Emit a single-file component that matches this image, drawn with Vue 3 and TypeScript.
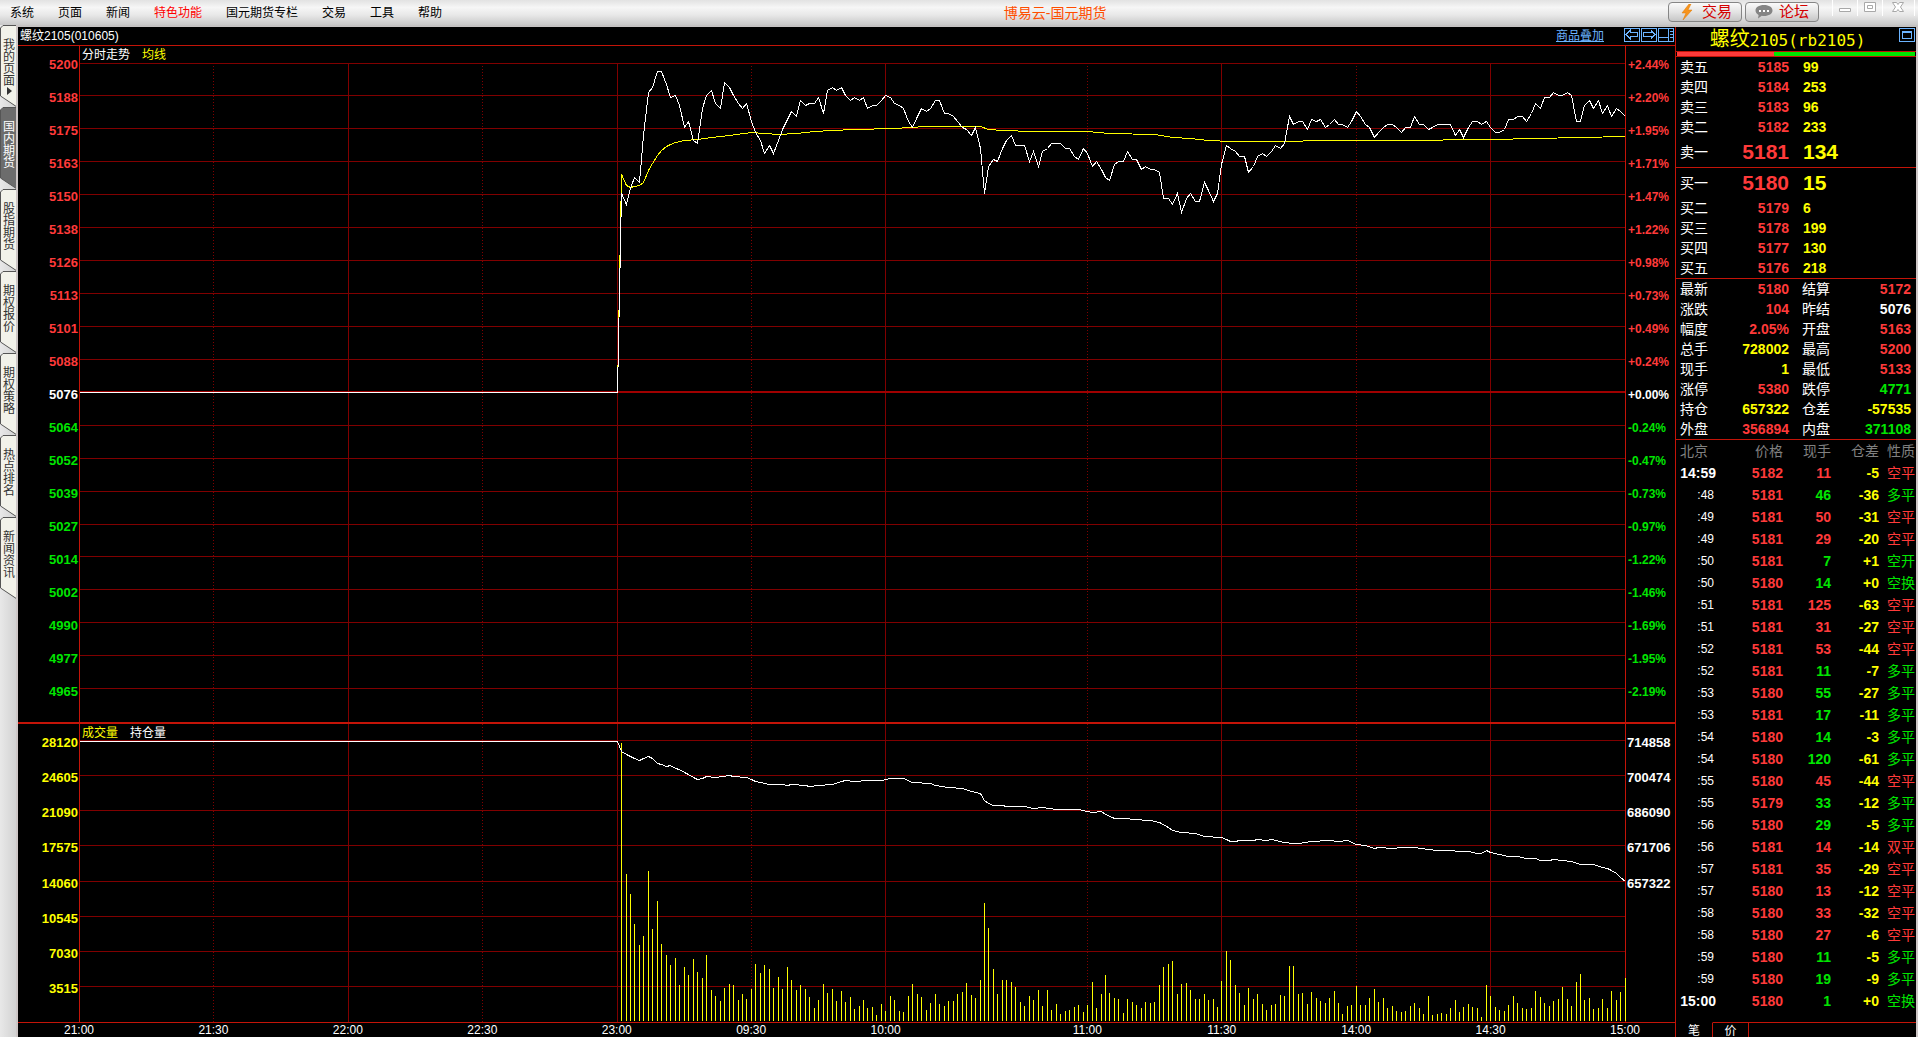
<script setup lang="ts">
import { computed, ref } from 'vue'

type Tone = 'up' | 'down' | 'flat' | 'vol'

interface MenuItem { label: string; hot?: boolean }
interface Level { name: string; price: number; qty: number }
interface Stat { name: string; value: string; tone: Tone }
interface Tick { time: string; price: number; qty: number; qtyTone: Tone; diff: string; kind: string; kindTone: Tone }

const menu: MenuItem[] = [
  { label: '系统' }, { label: '页面' }, { label: '新闻' }, { label: '特色功能', hot: true },
  { label: '国元期货专栏' }, { label: '交易' }, { label: '工具' }, { label: '帮助' },
]

const pages = ['我的页面', '国内期货', '股指期货', '期权报价', '期权策略', '热点排名', '新闻资讯']
const activePage = ref(1)

/* ---------- price and volume axes ---------- */
const priceLabels = [5200, 5188, 5175, 5163, 5150, 5138, 5126, 5113, 5101, 5088, 5076, 5064, 5052, 5039, 5027, 5014, 5002, 4990, 4977, 4965]
const percentLabels = ['+2.44%', '+2.20%', '+1.95%', '+1.71%', '+1.47%', '+1.22%', '+0.98%', '+0.73%', '+0.49%', '+0.24%', '+0.00%', '-0.24%', '-0.47%', '-0.73%', '-0.97%', '-1.22%', '-1.46%', '-1.69%', '-1.95%', '-2.19%']
const volumeLabels = [28120, 24605, 21090, 17575, 14060, 10545, 7030, 3515]
const interestLabels = ['714858', '700474', '686090', '671706', '657322', '', '', '']
const axisTone = (i: number): Tone => (i < 10 ? 'up' : i === 10 ? 'flat' : 'down')

/* ---------- session clock: minutes since 21:00, breaks removed ---------- */
const W = 1547
const MINUTES = 345
const OPEN = 120
const marks = [
  { at: 0, label: '21:00' }, { at: 30, label: '21:30' }, { at: 60, label: '22:00' }, { at: 90, label: '22:30' },
  { at: 120, label: '23:00' }, { at: 150, label: '09:30' }, { at: 180, label: '10:00' }, { at: 225, label: '11:00' },
  { at: 255, label: '11:30' }, { at: 285, label: '14:00' }, { at: 315, label: '14:30' }, { at: 345, label: '15:00' },
]
const span = (i: number): number => (i + 1 < marks.length ? marks[i + 1].at - marks[i].at : 0)
const innerMarks = marks.slice(1, -1).map((m, i) => ({ at: m.at, dotted: i % 2 === 0 }))

const px = (minute: number): number => Math.floor((minute * (W - 1)) / MINUTES + 0.3) + 0.5
const PRICE_H = 676
const VOLUME_H = 298
const py = (price: number): number => Math.round(17 + ((5200 - price) * 329) / 124) + 0.5
const priceGrid = priceLabels.map((_, i) => 17.5 + Math.floor(i * 32.93))
const volumeGrid = volumeLabels.map((_, i) => 16.5 + Math.floor(i * 35.25))

/* close of every minute from the open */
const closes = [
  5151, 5147, 5153, 5157, 5155, 5173, 5189, 5191, 5197, 5197, 5192, 5187, 5188, 5184, 5176, 5178, 5171, 5170, 5183, 5188,
  5190, 5185, 5183, 5193, 5191, 5188, 5185, 5183, 5185, 5178, 5174, 5171, 5166, 5169, 5166, 5171, 5175, 5179, 5182, 5180,
  5186, 5184, 5185, 5185, 5187, 5181, 5190, 5191, 5190, 5191, 5188, 5186, 5187, 5186, 5187, 5183, 5184, 5184, 5186, 5188,
  5187, 5185, 5184, 5183, 5178, 5176, 5180, 5183, 5182, 5183, 5186, 5186, 5181, 5181, 5180, 5178, 5176, 5175, 5173, 5176,
  5168, 5151, 5161, 5164, 5163, 5168, 5171, 5173, 5169, 5169, 5169, 5163, 5167, 5161, 5167, 5168, 5170, 5170, 5170, 5168,
  5168, 5165, 5164, 5168, 5166, 5161, 5163, 5160, 5157, 5156, 5162, 5163, 5163, 5167, 5164, 5164, 5160, 5161, 5160, 5160,
  5159, 5149, 5149, 5147, 5151, 5144, 5149, 5151, 5148, 5148, 5155, 5152, 5148, 5151, 5162, 5169, 5168, 5167, 5165, 5165,
  5159, 5161, 5165, 5166, 5165, 5167, 5169, 5168, 5170, 5180, 5177, 5178, 5178, 5175, 5179, 5178, 5179, 5176, 5177, 5179,
  5177, 5177, 5176, 5178, 5182, 5180, 5177, 5176, 5172, 5174, 5176, 5177, 5177, 5176, 5174, 5176, 5176, 5180, 5177, 5177,
  5175, 5176, 5177, 5177, 5177, 5177, 5173, 5175, 5172, 5176, 5178, 5178, 5177, 5178, 5176, 5174, 5174, 5175, 5179, 5179,
  5180, 5180, 5178, 5181, 5185, 5183, 5187, 5187, 5189, 5188, 5188, 5189, 5188, 5178, 5178, 5184, 5186, 5183, 5186, 5181,
  5184, 5180, 5183, 5182, 5180,
]

/* session average: [minute, price] */
const average: [number, number][] = [
  [120, 5076], [121, 5158.3], [122, 5154], [123, 5153.3], [124, 5153.6], [125, 5154], [126, 5155], [127, 5159.8], [128, 5162.3],
  [129, 5165.5], [130, 5167.3], [131, 5168.6], [132, 5169.6], [133, 5170.4], [135, 5171], [138, 5171.2], [141, 5172.1],
  [145, 5172.9], [150, 5174], [156, 5173.2], [160, 5173.7], [164, 5174.2], [168, 5174.7], [173, 5175.3], [182, 5175.6],
  [189, 5176.1], [201, 5176.1], [203, 5175.3], [206, 5174.7], [213, 5174.5], [225, 5174.2], [230, 5173.7], [240, 5173.1],
  [244, 5172.2], [248, 5171.6], [252, 5171.1], [257, 5170.7], [270, 5170.6], [276, 5170.9], [294, 5171.1], [315, 5171.4],
  [325, 5171.7], [335, 5172.1], [345, 5172.5],
]

/* open interest: [minute, depth below the top of the pane] */
const interest: [number, number][] = [
  [0, 17], [120, 17], [121, 27], [122, 30], [123, 32], [124, 34], [125, 36], [126, 34], [127, 32], [128, 34], [129, 39], [130, 40],
  [131, 42], [132, 41], [133, 44], [134, 45], [135, 48], [136, 50], [137, 53], [138, 55], [139, 54], [140, 52], [142, 53],
  [145, 51], [146, 52], [149, 53], [150, 55], [151, 57], [152, 58], [154, 60], [157, 60], [158, 61], [159, 60], [162, 61],
  [163, 62], [165, 61], [168, 60], [170, 57], [171, 56], [173, 57], [176, 56], [179, 56], [181, 54], [184, 54], [186, 58],
  [190, 59], [191, 61], [194, 63], [197, 64], [199, 67], [201, 69], [202, 76], [203, 79], [204, 81], [206, 81], [207, 82],
  [211, 82], [213, 84], [215, 83], [218, 85], [223, 85], [225, 87], [226, 88], [228, 87], [229, 90], [231, 94], [234, 94],
  [235, 95], [239, 96], [241, 98], [243, 103], [244, 106], [246, 108], [249, 109], [251, 112], [255, 113], [256, 115],
  [257, 117], [258, 117], [259, 116], [262, 116], [263, 115], [265, 116], [266, 115], [269, 118], [271, 119], [272, 119],
  [275, 117], [279, 116], [281, 117], [283, 116], [285, 120], [287, 121], [289, 124], [290, 123], [293, 124], [295, 123],
  [298, 123], [301, 125], [303, 126], [306, 126], [308, 127], [310, 127], [312, 129], [313, 129], [314, 126], [315, 128],
  [317, 130], [319, 132], [321, 132], [323, 134], [325, 134], [326, 136], [328, 136], [329, 135], [331, 136], [333, 137],
  [335, 140], [338, 140], [340, 143], [341, 144], [342, 146], [343, 149], [344, 153], [345, 157],
]

/* volume of every minute from the open, in hundreds of lots */
const volumes = [
  279, 148, 128, 98, 77, 86, 151, 93, 121, 78, 67, 57, 64, 37, 55, 47, 63, 50, 44, 67, 32, 26, 21, 34, 38, 37, 22, 28, 23, 33,
  58, 49, 57, 53, 34, 45, 33, 55, 42, 32, 37, 33, 25, 14, 22, 38, 29, 33, 21, 31, 20, 25, 13, 16, 22, 14, 15, 7, 18, 11,
  26, 22, 11, 10, 26, 38, 28, 25, 12, 19, 28, 18, 16, 21, 21, 28, 30, 39, 27, 24, 42, 119, 94, 53, 28, 42, 42, 40, 35, 20,
  16, 26, 22, 32, 16, 32, 12, 18, 8, 11, 12, 15, 17, 10, 17, 40, 14, 28, 47, 29, 24, 23, 9, 23, 20, 17, 14, 20, 19, 20,
  37, 55, 58, 61, 28, 38, 39, 32, 23, 23, 28, 22, 23, 15, 41, 71, 62, 37, 29, 17, 34, 23, 28, 18, 12, 17, 18, 27, 26, 56,
  56, 28, 29, 18, 30, 24, 21, 19, 24, 31, 19, 8, 16, 17, 36, 17, 17, 24, 33, 20, 24, 14, 16, 11, 10, 11, 16, 19, 14, 8,
  26, 7, 8, 9, 8, 14, 22, 10, 15, 18, 15, 14, 5, 37, 26, 15, 12, 11, 17, 26, 19, 14, 13, 14, 31, 25, 19, 16, 21, 23,
  35, 23, 16, 40, 48, 22, 24, 13, 14, 23, 14, 31, 22, 30, 44,
]

const closeLine = computed(() =>
  [`${px(0)},${py(5076)}`, `${px(OPEN)},${py(5076)}`, ...closes.map((c, i) => `${px(OPEN + 1 + i)},${py(c)}`)].join(' '))
const averageLine = computed(() => average.map(([m, p]) => `${px(m)},${py(p)}`).join(' '))
const interestLine = computed(() => interest.map(([m, y]) => `${px(m)},${y + 0.5}`).join(' '))
const volumeBars = computed(() => volumes.map((v, i) => `M${px(OPEN + 1 + i)} ${VOLUME_H - v}V${VOLUME_H - 1}`).join(''))

/* ---------- quote panel ---------- */
const asks: Level[] = [
  { name: '卖五', price: 5185, qty: 99 }, { name: '卖四', price: 5184, qty: 253 }, { name: '卖三', price: 5183, qty: 96 },
  { name: '卖二', price: 5182, qty: 233 }, { name: '卖一', price: 5181, qty: 134 },
]
const bids: Level[] = [
  { name: '买一', price: 5180, qty: 15 }, { name: '买二', price: 5179, qty: 6 }, { name: '买三', price: 5178, qty: 199 },
  { name: '买四', price: 5177, qty: 130 }, { name: '买五', price: 5176, qty: 218 },
]
const st = (name: string, value: string, tone: Tone): Stat => ({ name, value, tone })
const stats: [Stat, Stat][] = [
  [st('最新', '5180', 'up'), st('结算', '5172', 'up')],
  [st('涨跌', '104', 'up'), st('昨结', '5076', 'flat')],
  [st('幅度', '2.05%', 'up'), st('开盘', '5163', 'up')],
  [st('总手', '728002', 'vol'), st('最高', '5200', 'up')],
  [st('现手', '1', 'vol'), st('最低', '5133', 'up')],
  [st('涨停', '5380', 'up'), st('跌停', '4771', 'down')],
  [st('持仓', '657322', 'vol'), st('仓差', '-57535', 'vol')],
  [st('外盘', '356894', 'up'), st('内盘', '371108', 'down')],
]
const tk = (time: string, price: number, qty: number, tone: Tone, diff: string, kind: string): Tick =>
  ({ time, price, qty, qtyTone: tone, diff, kind, kindTone: tone })
const ticks: Tick[] = [
  tk('14:59', 5182, 11, 'up', '-5', '空平'), tk(':48', 5181, 46, 'down', '-36', '多平'), tk(':49', 5181, 50, 'up', '-31', '空平'),
  tk(':49', 5181, 29, 'up', '-20', '空平'), tk(':50', 5181, 7, 'down', '+1', '空开'), tk(':50', 5180, 14, 'down', '+0', '空换'),
  tk(':51', 5181, 125, 'up', '-63', '空平'), tk(':51', 5181, 31, 'up', '-27', '空平'), tk(':52', 5181, 53, 'up', '-44', '空平'),
  tk(':52', 5181, 11, 'down', '-7', '多平'), tk(':53', 5180, 55, 'down', '-27', '多平'), tk(':53', 5181, 17, 'down', '-11', '多平'),
  tk(':54', 5180, 14, 'down', '-3', '多平'), tk(':54', 5180, 120, 'down', '-61', '多平'), tk(':55', 5180, 45, 'up', '-44', '空平'),
  tk(':55', 5179, 33, 'down', '-12', '多平'), tk(':56', 5180, 29, 'down', '-5', '多平'), tk(':56', 5181, 14, 'up', '-14', '双平'),
  tk(':57', 5181, 35, 'up', '-29', '空平'), tk(':57', 5180, 13, 'up', '-12', '空平'), tk(':58', 5180, 33, 'up', '-32', '空平'),
  tk(':58', 5180, 27, 'up', '-6', '空平'), tk(':59', 5180, 11, 'down', '-5', '多平'), tk(':59', 5180, 19, 'down', '-9', '多平'),
  tk('15:00', 5180, 1, 'down', '+0', '空换'),
]
</script>

<template>
  <div class="app">
    <header class="topbar">
      <nav class="menu">
        <button v-for="m in menu" :key="m.label" type="button" :class="{ hot: m.hot }">{{ m.label }}</button>
      </nav>
      <h1>博易云-国元期货</h1>
      <div class="actions">
        <button type="button" class="action">
          <svg width="18" height="16" viewBox="0 0 18 16" aria-hidden="true">
            <path d="M11 0L4 9h4l-3 7 9-10h-4l3-6z" fill="#f7941d" stroke="#e07800" stroke-width=".5" />
          </svg>交易
        </button>
        <button type="button" class="action">
          <svg width="18" height="16" viewBox="0 0 18 16" aria-hidden="true">
            <path d="M9 1c5 0 8.500 2.300 8.500 5.500S14 12 9 12c-.8 0-1.500 0-2.200-.2L3 14.500l.6-3.600C1.600 9.900.5 8.400.5 6.500.5 3.300 4 1 9 1z" fill="#858585" />
            <g fill="#fff"><rect x="4" y="6" width="2" height="2" /><rect x="8" y="6" width="2" height="2" /><rect x="12" y="6" width="2" height="2" /></g>
          </svg>论坛
        </button>
      </div>
      <div class="window">
        <button type="button" aria-label="最小化"><svg width="13" height="12" viewBox="0 0 13 12"><path d="M.5 6.500h11v3H.5z" fill="#fff" stroke="#a8a8a8" /></svg></button>
        <button type="button" aria-label="还原"><svg width="13" height="12" viewBox="0 0 13 12"><path d="M.5.5h11v9H.5z M3.500 3.500h5v3h-5z" fill="#fff" stroke="#a8a8a8" /></svg></button>
        <button type="button" class="wide" aria-label="关闭"><svg width="13" height="12" viewBox="0 0 13 12"><path d="M.5.5h4l1.500 2 1.500-2h4L8.500 5l3 4.500h-4L6 7.500l-1.500 2h-4L3.500 5z" fill="#fff" stroke="#a8a8a8" /></svg></button>
      </div>
    </header>

    <div class="body">
      <nav class="pages">
        <button v-for="(p, i) in pages" :key="p" type="button" class="page" :class="{ active: i === activePage }" @click="activePage = i">
          <svg class="shape" width="17" height="82" viewBox="0 0 17 82" aria-hidden="true">
            <path d="M17 .5H3L.5 3V71L17 82" :fill="i === activePage ? '#6c6c6c' : '#f2f2ea'" stroke="#555" />
          </svg>
          <span>{{ p }}</span>
          <svg v-if="i === 0" class="more" width="5" height="8" viewBox="0 0 5 8" aria-hidden="true"><path d="M0 0l5 4-5 4z" fill="#333" /></svg>
        </button>
      </nav>

      <main class="chart">
        <div class="caption">
          <h2>螺纹2105(010605)</h2>
          <a href="#">商品叠加</a>
          <div class="tools">
            <button type="button" aria-label="向左"><svg width="16" height="14" viewBox="0 0 16 14"><path d="M.5.5h15v13H.5zM2 6.500l4-4v2h7.500v4H6v2z" /></svg></button>
            <button type="button" aria-label="向右"><svg width="16" height="14" viewBox="0 0 16 14"><path d="M.5.5h15v13H.5zM14 6.500l-4-4v2H2.500v4H10v2z" /></svg></button>
            <button type="button" aria-label="布局"><svg width="16" height="14" viewBox="0 0 16 14"><path d="M.5.5h15v13H.5zM10.500.5v13M.5 9.500h10M12 3.500h3M12 6.500h3M12 9.500h3" /></svg></button>
          </div>
        </div>

        <section class="pane price">
          <ol class="axis left">
            <li v-for="(v, i) in priceLabels" :key="v" :class="axisTone(i)">{{ v }}</li>
          </ol>
          <div class="plot">
            <svg class="layer" :viewBox="`0 0 ${W} ${PRICE_H}`" preserveAspectRatio="none" aria-hidden="true">
              <path v-for="y in priceGrid" :key="y" class="grid" :d="`M0 ${y}H${W}`" />
              <path v-for="m in innerMarks" :key="m.at" class="grid" :class="{ dotted: m.dotted }" :d="`M${px(m.at)} 17V${PRICE_H}`" />
              <path class="base" :d="`M0 346H${W}`" />
              <path class="edge" :d="`M.5 0V${PRICE_H}M${W - 0.5} 0V${PRICE_H}`" />
              <polyline class="average" :points="averageLine" />
              <polyline class="close" :points="closeLine" />
            </svg>
            <p class="legend"><span>分时走势</span><span class="vol">均线</span></p>
          </div>
          <ol class="axis right percent">
            <li v-for="(v, i) in percentLabels" :key="v" :class="axisTone(i)">{{ v }}</li>
          </ol>
        </section>

        <section class="pane volume">
          <ol class="axis left">
            <li v-for="v in volumeLabels" :key="v" class="vol">{{ v }}</li>
          </ol>
          <div class="plot">
            <svg class="layer" :viewBox="`0 0 ${W} ${VOLUME_H}`" preserveAspectRatio="none" aria-hidden="true">
              <path v-for="y in volumeGrid" :key="y" class="grid" :d="`M0 ${y}H${W}`" />
              <path v-for="m in innerMarks" :key="m.at" class="grid" :class="{ dotted: m.dotted }" :d="`M${px(m.at)} 0V${VOLUME_H}`" />
              <path class="edge" :d="`M.5 0V${VOLUME_H}M${W - 0.5} 0V${VOLUME_H}`" />
              <path class="average" :d="volumeBars" />
              <polyline class="close" :points="interestLine" />
            </svg>
            <p class="legend"><span class="vol">成交量</span><span>持仓量</span></p>
          </div>
          <ol class="axis right">
            <li v-for="(v, i) in interestLabels" :key="i">{{ v }}</li>
          </ol>
        </section>

        <div class="clock">
          <div v-for="(m, i) in marks" :key="m.label" :style="{ flexGrow: span(i) }"><time>{{ m.label }}</time></div>
        </div>
      </main>

      <aside class="quote">
        <div class="name">
          <h2>螺纹<span>2105(rb2105)</span></h2>
          <button type="button" aria-label="窗口"><svg width="16" height="14" viewBox="0 0 16 14"><path d="M.5.5h15v13H.5z" /><path d="M3.500 3.500h9v7h-9zM3.500 4.500h9" /></svg></button>
        </div>
        <div class="ratio"><i class="sell"></i><i class="buy"></i></div>

        <table class="book">
          <colgroup><col class="c-label"><col class="c-price"><col></colgroup>
          <tbody>
            <tr v-for="(l, i) in asks" :key="l.name" :class="{ best: i === 4 }">
              <th scope="row">{{ l.name }}</th><td class="num up">{{ l.price }}</td><td class="qty vol">{{ l.qty }}</td>
            </tr>
          </tbody>
        </table>
        <table class="book">
          <colgroup><col class="c-label"><col class="c-price"><col></colgroup>
          <tbody>
            <tr v-for="(l, i) in bids" :key="l.name" :class="{ best: i === 0 }">
              <th scope="row">{{ l.name }}</th><td class="num up">{{ l.price }}</td><td class="qty vol">{{ l.qty }}</td>
            </tr>
          </tbody>
        </table>
        <table class="book">
          <colgroup><col class="c-label"><col class="c-price"><col class="c-second"><col></colgroup>
          <tbody>
            <tr v-for="[a, b] in stats" :key="a.name">
              <th scope="row">{{ a.name }}</th><td class="num" :class="a.tone">{{ a.value }}</td>
              <th scope="row" class="second">{{ b.name }}</th><td class="num end" :class="b.tone">{{ b.value }}</td>
            </tr>
          </tbody>
        </table>

        <table class="ticks">
          <colgroup><col class="t-time"><col class="t-price"><col class="t-qty"><col class="t-qty"><col></colgroup>
          <thead>
            <tr><th class="start">北京</th><th>价格</th><th>现手</th><th>仓差</th><th class="kind">性质</th></tr>
          </thead>
          <tbody>
            <tr v-for="(t, i) in ticks" :key="i">
              <td :class="t.time.length > 3 ? 'minute' : 'second'">{{ t.time }}</td>
              <td class="up">{{ t.price }}</td>
              <td :class="t.qtyTone">{{ t.qty }}</td>
              <td class="vol">{{ t.diff }}</td>
              <td class="kind" :class="t.kindTone">{{ t.kind }}</td>
            </tr>
          </tbody>
        </table>

        <div class="tabs">
          <button type="button" class="on">笔</button>
          <button type="button">价</button>
          <span class="rest"></span>
        </div>
      </aside>
    </div>
  </div>
</template>

<style>
body { margin: 0; background: #000; }
</style>

<style scoped>
.app {
  display: flex;
  flex-direction: column;
  min-height: 100vh;
  background: #000;
  color: #fff;
  font: 12px/14px "Liberation Sans", "Noto Sans CJK SC", sans-serif;
}
h1, h2, p, ol { margin: 0; padding: 0; font-weight: normal; list-style: none; }
button { padding: 0; border: 0; background: none; color: inherit; font: inherit; cursor: pointer; }
svg { display: block; flex: none; }

.up { color: #ff3a3a; }
.down { color: #00e600; }
.flat { color: #fff; }
.vol { color: #ff0; }

/* top bar */
.topbar {
  display: flex;
  height: 25px;
  padding-right: 3px;
  border-bottom: 2px solid #c4c2c2;
  background: linear-gradient(#e2e2e2, #f6f6f6 30%, #e8e8e8 60%, #c8c8c8);
  color: #000;
}
.menu { display: flex; gap: 24px; padding-left: 10px; }
.menu button { line-height: 27px; }
.menu .hot { color: #f00; }
h1 { flex: 1; color: #ff4e00; font-size: 14px; line-height: 27px; text-align: center; }
.actions { display: flex; gap: 3px; padding: 2px 13px 0 0; }
.action {
  display: flex;
  align-items: center;
  justify-content: center;
  gap: 6px;
  box-sizing: border-box;
  width: 74px;
  height: 20px;
  border: 1px solid #858585;
  border-radius: 4px;
  background: linear-gradient(#fafafa, #e4e4e4 50%, #c6c6c6);
  color: #d40000;
  font-size: 15px;
  line-height: 18px;
}
.window { display: flex; height: 16px; }
.window button { display: flex; justify-content: center; width: 25px; padding-top: 2px; border-left: 1px solid #fff; }
.window .wide { width: 33px; border-right: 1px solid #fff; }

/* page tabs */
.body { display: flex; flex: 1; border-right: 2px solid #cdc6c6; }
.pages { width: 16px; margin-top: -2px; border-right: 2px solid #cdc6c6; background: linear-gradient(90deg, #e8e8e8, #d2d2d2); }
.page { display: block; position: relative; width: 16px; height: 82px; overflow: hidden; color: #333; }
.page .shape { position: absolute; left: 0; top: 0; }
.page span { display: block; position: relative; width: 12px; margin: -6px 0 0 3px; line-height: 12px; word-break: break-all; }
.page .more { position: absolute; left: 7px; bottom: 12px; }
.page.active { color: #fff; }

/* chart */
.chart { display: flex; flex: 1; flex-direction: column; min-width: 0; }
.caption { display: flex; align-items: flex-start; height: 18px; padding-right: 1px; border-bottom: 1px solid #c41408; }
.caption h2 { flex: 1; padding-left: 2px; font-size: 12px; line-height: 18px; }
.caption a { margin-right: 20px; color: #6cb4ff; line-height: 18px; text-decoration: underline; }
.tools { display: flex; gap: 1px; padding-top: 1px; }
.tools path, .name path { fill: none; stroke: #6cb4ff; shape-rendering: crispEdges; }

.pane { display: flex; min-height: 0; }
.price { flex: 676 1 0; border-bottom: 2px solid #c41408; }
.volume { flex: 298 1 0; border-bottom: 1px solid #c41408; }
.axis { display: flex; flex-direction: column; box-sizing: border-box; font-size: 13px; font-weight: bold; }
.axis li { display: flex; flex: 1; align-items: center; min-height: 0; }
.axis.left { width: 61px; padding-right: 1px; }
.axis.left li { justify-content: flex-end; }
.axis.right { width: 49px; padding-left: 1px; }
.axis.percent { padding-left: 2px; font-size: 12px; }
.price .axis { padding-top: 3px; padding-bottom: 14px; }
.volume .axis { padding-top: 1px; padding-bottom: 15px; }
.plot { position: relative; flex: 1; min-width: 0; }
.layer { position: absolute; inset: 0; width: 100%; height: 100%; shape-rendering: crispEdges; }
.layer path, .layer polyline { fill: none; vector-effect: non-scaling-stroke; }
.grid { stroke: #800000; }
.grid.dotted { stroke-dasharray: 1 2; }
.base { stroke: #a00000; stroke-width: 2px; }
.edge { stroke: #c41408; }
.average { stroke: #ff0; }
.close { stroke: #fff; }
.legend { display: flex; position: relative; gap: 12px; padding-left: 3px; line-height: 19px; }

.clock { display: flex; height: 14px; padding: 0 50px 0 61px; line-height: 15px; }
.clock div { flex: 0 1 0; min-width: 0; }
.clock time { display: block; width: 40px; margin-left: -20px; text-align: center; }

/* quote panel */
.quote { display: flex; flex: none; flex-direction: column; width: 240px; border-left: 1px solid #c41408; font-size: 14px; }
.name { display: flex; height: 24px; padding-right: 1px; border-bottom: 1px solid #c41408; }
.name h2 { flex: 1; color: #ff0; font-size: 20px; line-height: 24px; text-align: center; }
.name h2 span { font-family: "DejaVu Sans Mono", monospace; font-size: 16px; }
.name button { align-self: flex-start; padding-top: 1px; }
.ratio { display: flex; height: 4px; padding: 0 1px; border-bottom: 1px solid #c41408; }
.sell { flex: 97; background: #ff3a3a; }
.buy { flex: 141; background: #00e600; }

table { width: 100%; border-collapse: collapse; table-layout: fixed; }
th, td { padding: 0; font-weight: normal; text-align: left; white-space: nowrap; }
.book { border-bottom: 1px solid #c41408; }
.book tr { height: 20px; line-height: 20px; }
.book tr.best { height: 30px; line-height: 30px; }
.book th { padding-left: 4px; }
.book .second { padding-left: 13px; }
.book td { font-weight: bold; }
.book .best td { font-size: 21px; }
.book .num { text-align: right; }
.book .qty { padding-left: 14px; }
.book .end { padding-right: 5px; }
.c-label { width: 40px; }
.c-price { width: 73px; }
.c-second { width: 50px; }

.ticks tr { height: 22px; line-height: 22px; }
.ticks th, .ticks td { text-align: right; }
.ticks td { font-weight: bold; }
.ticks th { color: #808080; }
.ticks .start { padding-left: 4px; text-align: left; }
.ticks .second { padding-right: 2px; font-size: 12px; font-weight: normal; }
.ticks .kind { padding-left: 8px; font-weight: normal; text-align: left; }
.t-time { width: 40px; }
.t-price { width: 67px; }
.t-qty { width: 48px; }

.tabs { display: flex; height: 15px; margin-top: auto; overflow: hidden; font-size: 12px; }
.tabs button { box-sizing: border-box; width: 36px; height: 15px; border-top: 1px solid #c41408; border-right: 1px solid #c41408; line-height: 16px; }
.tabs .on { width: 37px; border-top-color: transparent; }
.rest { flex: 1; border-top: 1px solid #c41408; }
</style>
